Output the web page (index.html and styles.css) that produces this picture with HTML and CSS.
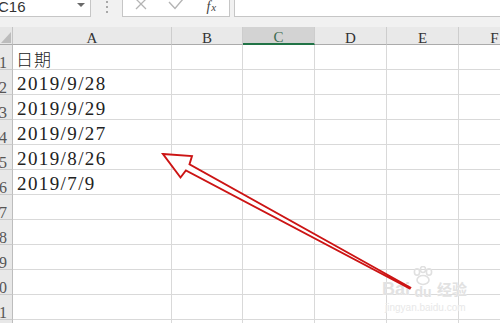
FILE: index.html
```html
<!DOCTYPE html>
<html lang="zh">
<head>
  <meta charset="UTF-8" />
  <title>日期</title>
  <link rel="stylesheet" href="styles.css">
</head>
<body>
<div class="formula-bar">
  <div class="name-box"><span class="name">C16</span><span class="caret"></span></div>
  <div class="grip"><i></i><i></i><i></i></div>
  <div class="fx-buttons">
    <span class="btn">
      <svg width="12" height="12" viewBox="0 0 12 12"><path d="M1 -1 L11 9 M11 -1 L1 9" stroke="#b4b4b4" stroke-width="1.3" fill="none"/></svg>
    </span>
    <span class="btn">
      <svg width="16" height="12" viewBox="0 0 16 12"><path d="M1 2 L7 8.5 L15 -1" stroke="#b4b4b4" stroke-width="1.4" fill="none"/></svg>
    </span>
    <span class="btn fx"><i>f</i><i class="x">x</i></span>
  </div>
  <div class="formula-input"></div>
</div>

<div class="sheet">
  <div class="corner"><svg width="12" height="17" viewBox="0 0 12 17"><path d="M11 5 L11 16 L1 16 Z" fill="#bcbcbc"/></svg></div>
  <div class="ch">A</div>
  <div class="ch">B</div>
  <div class="ch active">C</div>
  <div class="ch">D</div>
  <div class="ch">E</div>
  <div class="ch">F</div>

  <div class="rh"><span>1</span></div><div class="cell cjk">日期</div><div class="cell"></div><div class="cell"></div><div class="cell"></div><div class="cell"></div><div class="cell"></div>
  <div class="rh"><span>2</span></div><div class="cell">2019/9/28</div><div class="cell"></div><div class="cell"></div><div class="cell"></div><div class="cell"></div><div class="cell"></div>
  <div class="rh"><span>3</span></div><div class="cell">2019/9/29</div><div class="cell"></div><div class="cell"></div><div class="cell"></div><div class="cell"></div><div class="cell"></div>
  <div class="rh"><span>4</span></div><div class="cell">2019/9/27</div><div class="cell"></div><div class="cell"></div><div class="cell"></div><div class="cell"></div><div class="cell"></div>
  <div class="rh"><span>5</span></div><div class="cell">2019/8/26</div><div class="cell"></div><div class="cell"></div><div class="cell"></div><div class="cell"></div><div class="cell"></div>
  <div class="rh"><span>6</span></div><div class="cell">2019/7/9</div><div class="cell"></div><div class="cell"></div><div class="cell"></div><div class="cell"></div><div class="cell"></div>
  <div class="rh"><span>7</span></div><div class="cell"></div><div class="cell"></div><div class="cell"></div><div class="cell"></div><div class="cell"></div><div class="cell"></div>
  <div class="rh"><span>8</span></div><div class="cell"></div><div class="cell"></div><div class="cell"></div><div class="cell"></div><div class="cell"></div><div class="cell"></div>
  <div class="rh"><span>9</span></div><div class="cell"></div><div class="cell"></div><div class="cell"></div><div class="cell"></div><div class="cell"></div><div class="cell"></div>
  <div class="rh"><span>10</span></div><div class="cell"></div><div class="cell"></div><div class="cell"></div><div class="cell"></div><div class="cell"></div><div class="cell"></div>
  <div class="rh"><span>11</span></div><div class="cell"></div><div class="cell"></div><div class="cell"></div><div class="cell"></div><div class="cell"></div><div class="cell"></div>
  <div class="rh"><span>12</span></div><div class="cell"></div><div class="cell"></div><div class="cell"></div><div class="cell"></div><div class="cell"></div><div class="cell"></div>
</div>

<!-- watermark -->
<div class="watermark">
  <div class="logo">
    <span class="bai">Bai</span>
    <span class="paw">
      <svg width="24" height="20" viewBox="0 0 24 20">
        <g fill="none" stroke="#e0e0e0" stroke-width="1.6">
          <ellipse cx="6" cy="6" rx="2.6" ry="3.2"/>
          <ellipse cx="12" cy="3.5" rx="2.6" ry="3"/>
          <ellipse cx="18" cy="6" rx="2.6" ry="3.2"/>
          <ellipse cx="12" cy="14" rx="6" ry="4.5"/>
        </g>
      </svg>
      <span class="du">du</span>
    </span>
    <span class="jy">经验</span>
  </div>
  <div class="url">jingyan.baidu.com</div>
</div>

<!-- annotation arrow -->
<svg class="arrow" width="500" height="323" viewBox="0 0 500 323">
  <polygon points="163,154 192,156 189.5,164.3 410.3,287.5 409.7,288.5 185.9,170.4 180.5,177.5"
    fill="#ffffff" fill-opacity="0.85" stroke="#cc1414" stroke-width="1.9" stroke-linejoin="miter"/>
</svg>
</body>
</html>
```

FILE: styles.css
```css
body { margin: 0; width: 500px; height: 323px; overflow: hidden; background: #fff; font-family: "Liberation Serif", serif; position: relative; }

.formula-bar { height: 27px; background: #f1f1f1; display: flex; align-items: flex-start; }
.name-box { width: 91px; height: 17px; box-sizing: border-box; background: #fff; border-right: 1px solid #c6c6c6; border-bottom: 1px solid #c6c6c6; display: flex; justify-content: space-between; align-items: flex-start; padding-right: 5px; }
.name { font: 15px/14px "Liberation Sans", sans-serif; color: #333; margin-left: -2px; }
.caret { margin-top: 3px; width: 0; height: 0; border-left: 4px solid transparent; border-right: 4px solid transparent; border-top: 4px solid #6a6a6a; }
.grip { margin-left: 15px; width: 2px; display: flex; flex-direction: column; gap: 3px; padding-top: 1px; }
.grip i { width: 2px; height: 2px; background: #a8a8a8; }
.fx-buttons { margin-left: 14px; width: 108px; height: 17px; box-sizing: border-box; background: #fff; border: 1px solid #c6c6c6; border-top: none; display: flex; }
.btn { width: 36px; display: flex; justify-content: center; align-items: flex-start; }
.btn svg { display: block; }
.fx { font: italic 14px/12px "Liberation Serif", serif; color: #444; padding-top: 1px; }
.fx .x { font-size: 11px; margin-left: 1px; }
.formula-input { margin-left: 4px; flex: 1; height: 17px; box-sizing: border-box; background: #fff; border-left: 1px solid #c6c6c6; border-bottom: 1px solid #c6c6c6; }

.sheet { display: grid; grid-template-columns: 13px 159px 71px 72px 72px 72px 72px; grid-template-rows: 18px; grid-auto-rows: 25px; }
.sheet > div { box-sizing: border-box; }

.corner { background: #e6e6e6; border-right: 1px solid #c4c4c4; border-bottom: 1px solid #ababab; }
.corner svg { display: block; }
.ch { background: #e9e9e9; border-right: 1px solid #cdcdcd; border-bottom: 1px solid #ababab; display: flex; justify-content: center; align-items: flex-end; font-size: 15px; line-height: 12px; color: #333; }
.ch.active { background: #d3d3d3; color: #3e6d52; border-bottom: 2px solid #217346; line-height: 11px; }

.rh { background: #e8e8e8; border-right: 1px solid #bdbdbd; border-bottom: 1px solid #cbcbcb; display: flex; justify-content: flex-end; align-items: flex-end; overflow: hidden; padding-right: 5px; }
.rh span { flex: none; font-size: 16px; line-height: 13px; color: #555; }

.cell { border-right: 1px solid #d9d9d9; border-bottom: 1px solid #d9d9d9; display: flex; align-items: flex-end; padding-left: 4px; font-size: 19px; line-height: 20px; letter-spacing: 1.4px; color: #222; white-space: nowrap; }
.cell.cjk { font-family: "Noto Sans CJK SC", sans-serif; font-weight: 300; font-size: 17px; letter-spacing: 1px; padding-left: 3px; }

.watermark { position: absolute; left: 382px; top: 265px; color: #e2e2e2; text-shadow: 0 0 1px #fff; }
.logo { display: flex; align-items: flex-end; height: 33px; }
.bai { font: bold 18px/18px "Liberation Sans", sans-serif; }
.paw { display: flex; flex-direction: column; align-items: center; margin-left: 1px; }
.paw svg { display: block; }
.du { font: bold 14px/12px "Liberation Sans", sans-serif; }
.jy { font: bold 15px/18px "Noto Sans CJK SC", sans-serif; margin-left: 2px; }
.url { font: 10px/12px "Liberation Sans", sans-serif; color: #e8e8e8; margin-top: 4px; padding-left: 3px; }

.arrow { position: absolute; left: 0; top: 0; pointer-events: none; }
```
